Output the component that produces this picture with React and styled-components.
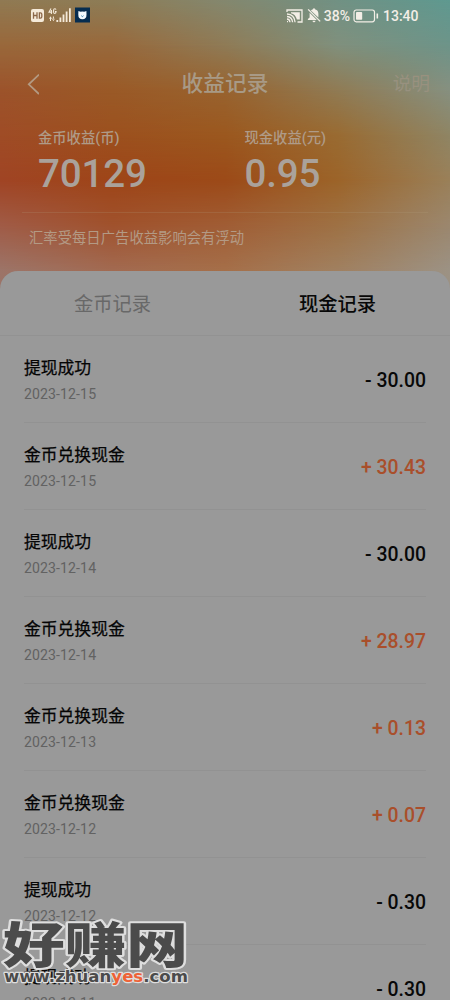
import React from 'react';
import styled, { createGlobalStyle } from 'styled-components';

const GlobalStyle = createGlobalStyle`
  * { box-sizing: border-box; }
  html, body { margin: 0; padding: 0; }
  body { background: #999; overflow: hidden; }
`;

const Screen = styled.div`
  position: relative;
  width: 450px;
  height: 1000px;
  overflow: hidden;
  background: #999;
  font-family: Roboto, 'Noto Sans CJK SC', sans-serif;
  color: #050505;
`;

const Hero = styled.div`
  display: grid;
  height: 290px;
  & > * { grid-area: 1 / 1; }
`;

const Band = styled.div`
  background: linear-gradient(90deg, ${p => p.$colors.join(', ')});
  ${p => p.$at > 0 && `
    mask-image: linear-gradient(180deg, transparent ${p.$at - 45}px, #000 ${p.$at}px);
  `}
`;

const HeroContent = styled.div`
  position: relative;
  display: flex;
  flex-direction: column;
  color: #aaa29b;
`;

const StatusBar = styled.div`
  display: flex;
  justify-content: space-between;
  height: 31px;
  padding: 0 31.5px 0 30px;
  color: #f3eee6;
`;

const StatusGroup = styled.div`
  display: flex;
  align-items: center;
  font-size: 14px;
  font-weight: 500;
`;

const StatusText = styled.span`
  line-height: 30px;
  margin-left: ${p => p.$gap}px;
`;

const Bell = styled.svg`
  margin-left: 4px;
`;

const Battery = styled.svg`
  margin-left: 3px;
`;

const Header = styled.header`
  display: grid;
  grid-template-columns: 80px 1fr 80px;
  align-items: center;
  height: 105px;
  padding: 0 20px 0 23px;
`;

const Title = styled.h1`
  margin: 0;
  text-align: center;
  font-size: 21.7px;
  line-height: 30px;
  font-weight: 500;
  color: #a89a86;
  padding-right: 3px;
`;

const HelpLink = styled.span`
  text-align: right;
  font-size: 18.7px;
  line-height: 28px;
  color: #98917f;
`;

const Totals = styled.div`
  display: grid;
  grid-template-columns: 206.5px 1fr;
  height: 76px;
  margin: -9px 22px 0;
  padding-left: 16px;
`;

const TotalLabel = styled.div`
  padding-top: 1px;
  font-size: 14.3px;
  line-height: 20px;
  font-weight: 500;
  color: #af9b88;
`;

const TotalValue = styled.div`
  margin-top: 4px;
  font-size: 38.6px;
  line-height: 44px;
  font-weight: 500;
  letter-spacing: -0.2px;
`;

const RateNote = styled.div`
  margin: 9px 22px 0;
  padding: 16px 7px;
  border-top: 1px solid rgba(180, 160, 130, 0.2);
  font-size: 14.35px;
  line-height: 20px;
  color: #b39a85;
`;

const Sheet = styled.main`
  position: relative;
  margin-top: -19.5px;
  background: #999;
  border-radius: 18px 18px 0 0;
`;

const Tabs = styled.div`
  display: grid;
  grid-template-columns: 1fr 1fr;
  height: 65px;
  border-bottom: 1px solid #929292;
`;

const Tab = styled.div`
  text-align: center;
  font-size: 19.3px;
  line-height: 68px;
  font-weight: ${p => (p.$active ? 500 : 400)};
  color: ${p => (p.$active ? '#080808' : '#686868')};
`;

const Records = styled.div`
  padding: 1px 24px 0;
`;

const Record = styled.div`
  display: flex;
  justify-content: space-between;
  align-items: center;
  height: 86.9px;
  padding-top: 3px;
  border-bottom: 1px solid #929292;
`;

const RecordName = styled.div`
  font-size: 16.8px;
  line-height: 24px;
  font-weight: 400;
  -webkit-text-stroke: 0.25px currentColor;
`;

const RecordDate = styled.div`
  margin-top: 3px;
  font-size: 14.1px;
  line-height: 22px;
  letter-spacing: 0.1px;
  color: #626262;
`;

const Amount = styled.div`
  font-size: 19.4px;
  font-weight: 500;
  color: ${p => (p.$income ? '#a94f2b' : '#080808')};
`;

const Watermark = styled.svg`
  position: absolute;
  left: 0;
  top: 912px;
`;

const bands = [
  [0, ['#907a53', '#8d7d57', '#84886f', '#719184', '#5f9990']],
  [45, ['#99683b', '#98693c', '#8f7b56', '#80907d', '#6d9489']],
  [90, ['#9c532b', '#9a5a27', '#98632f', '#907b54', '#869080']],
  [135, ['#9f4c26', '#9c501e', '#9b581f', '#996b32', '#8f8564']],
  [180, ['#a04424', '#9e4518', '#9c4a18', '#9c6429', '#9a8059']],
  [225, ['#a05b46', '#a0522d', '#a05d35', '#9e7144', '#9b876e']],
  [270, ['#9c7468', '#a26a51', '#a56f49', '#a08060', '#9c9284']],
];

const records = [
  ['提现成功', '2023-12-15', '- 30.00'],
  ['金币兑换现金', '2023-12-15', '+ 30.43'],
  ['提现成功', '2023-12-14', '- 30.00'],
  ['金币兑换现金', '2023-12-14', '+ 28.97'],
  ['金币兑换现金', '2023-12-13', '+ 0.13'],
  ['金币兑换现金', '2023-12-12', '+ 0.07'],
  ['提现成功', '2023-12-12', '- 0.30'],
  ['提现成功', '2023-12-11', '- 0.30'],
];

const NetworkIcons = () => (
  <svg width="62" height="17" viewBox="30 7 62 17">
    <rect x="31" y="9" width="13" height="13" rx="2" fill="#f5ead9" />
    <path d="M33.5 12.3v6.4M37 12.3v6.4M33.5 15.5h3.5M39.4 12.9v5.2h1q1.4 0 1.4-1.4v-2.4q0-1.4-1.4-1.4z" fill="none" stroke="#8c6748" strokeWidth="1.3" />
    <path d="M51 8.5l-2 3.6h3.2M51.4 10v4M56 9.6q-.4-.9-1.2-.9-1.2 0-1.2 1.5v1.8q0 1.5 1.2 1.5 1.3 0 1.3-1.9H55" fill="none" stroke="#f5ead9" strokeWidth="1.1" />
    <path d="M49 18.7l1.5-2.4 1.5 2.4zM50 18h1v3h-1zM52 18.8l1.4 2.4 1.4-2.4zM52.9 16.5h1v3h-1z" fill="#f5ead9" />
    <path d="M57.3 22v-2M60.4 22v-4.5M63.5 22v-7.5M66.6 22V11.5M69.9 22V8.3" stroke="#f5ead9" strokeWidth="1.8" />
    <rect x="75" y="7.5" width="15" height="15" fill="#062d50" />
    <path d="M78.4 11l2.2.8q1.8-.8 3.6 0l2.2-.8.1 3.6q.1 4.7-4.1 4.7t-4.1-4.7z" fill="#f3faff" />
    <path d="M81.3 15.7l1.1.9 1.1-.9" fill="none" stroke="#287aa5" strokeWidth=".9" />
  </svg>
);

const CastIcon = () => (
  <svg width="17" height="14" viewBox="0 0 17 14" fill="none" stroke="currentColor" strokeWidth="1.3">
    <path d="M1 3V1h15v12h-4.5" />
    <path d="M1 12.6h1M1 10q2.7.2 3 3.2M1 7.5q5 .3 5.6 5.7M1 5q7.5.4 8.1 8.2" />
    <path d="M5 3.2h8.8v7.4h-2.9Q9.5 5.2 5 4.2z" fill="currentColor" stroke="none" />
  </svg>
);

const MutedBellIcon = () => (
  <Bell width="14" height="15" viewBox="0 0 14 15" fill="currentColor">
    <path d="M3.9 2.5Q4.7 1.6 6 1.3q0-1.1 1-1.1t1 1.1q3.4.9 3.4 4.6v3.6zM2.6 4.8l7.2 7.2H.9v-.9l1.7-1.7zM5.5 12.8h3q-.1 1.5-1.5 1.5t-1.5-1.5z" />
    <path d="M1.6.9l12 12-.9.9-12-12z" />
  </Bell>
);

const BatteryIcon = () => (
  <Battery width="26" height="14" viewBox="0 0 26 14" fill="none" stroke="currentColor" strokeWidth="1.2">
    <rect x="1" y="1" width="20.5" height="11.8" rx="2.2" />
    <rect x="3" y="3" width="6.2" height="7.8" rx=".8" fill="currentColor" stroke="none" />
    <path d="M24.3 4.5v5" strokeWidth="1.6" />
  </Battery>
);

const BackIcon = () => (
  <svg width="16" height="22" viewBox="0 0 16 22" fill="none" stroke="#b39a83" strokeWidth="1.8">
    <path d="M16 1.6L5.8 11.3 16 21" />
  </svg>
);

export default function App() {
  return (
    <Screen>
      <GlobalStyle />
      <Hero>
        {bands.map(([at, colors]) => <Band key={at} $at={at} $colors={colors} />)}
        <HeroContent>
          <StatusBar>
            <StatusGroup><NetworkIcons /></StatusGroup>
            <StatusGroup>
              <CastIcon />
              <MutedBellIcon />
              <StatusText $gap={3}>38%</StatusText>
              <BatteryIcon />
              <StatusText $gap={4}>13:40</StatusText>
            </StatusGroup>
          </StatusBar>
          <Header>
            <BackIcon />
            <Title>收益记录</Title>
            <HelpLink>说明</HelpLink>
          </Header>
          <Totals>
            <div>
              <TotalLabel>金币收益(币)</TotalLabel>
              <TotalValue>70129</TotalValue>
            </div>
            <div>
              <TotalLabel>现金收益(元)</TotalLabel>
              <TotalValue>0.95</TotalValue>
            </div>
          </Totals>
          <RateNote>汇率受每日广告收益影响会有浮动</RateNote>
        </HeroContent>
      </Hero>
      <Sheet>
        <Tabs>
          <Tab>金币记录</Tab>
          <Tab $active>现金记录</Tab>
        </Tabs>
        <Records>
          {records.map(([name, date, amount], i) => (
            <Record key={i}>
              <div>
                <RecordName>{name}</RecordName>
                <RecordDate>{date}</RecordDate>
              </div>
              <Amount $income={amount[0] === '+'}>{amount}</Amount>
            </Record>
          ))}
        </Records>
      </Sheet>
      <Watermark width="200" height="88" viewBox="0 0 200 88">
        <g fill="#4b4b4b" stroke="#dedede" strokeLinejoin="round" paintOrder="stroke">
          <text transform="translate(3 50.5) scale(1 .86)" textLength="185" lengthAdjust="spacingAndGlyphs" fontFamily="'Noto Sans CJK SC', sans-serif" fontSize="57" fontWeight="900" strokeWidth="4.6">好赚网</text>
          <text x="4" y="70" textLength="184" lengthAdjust="spacingAndGlyphs" fontFamily="'DejaVu Sans', sans-serif" fontSize="15.5" fontWeight="700" strokeWidth="2.4">
            www.zhuan<tspan fill="#ee6237">yes</tspan>.com
          </text>
        </g>
      </Watermark>
    </Screen>
  );
}
